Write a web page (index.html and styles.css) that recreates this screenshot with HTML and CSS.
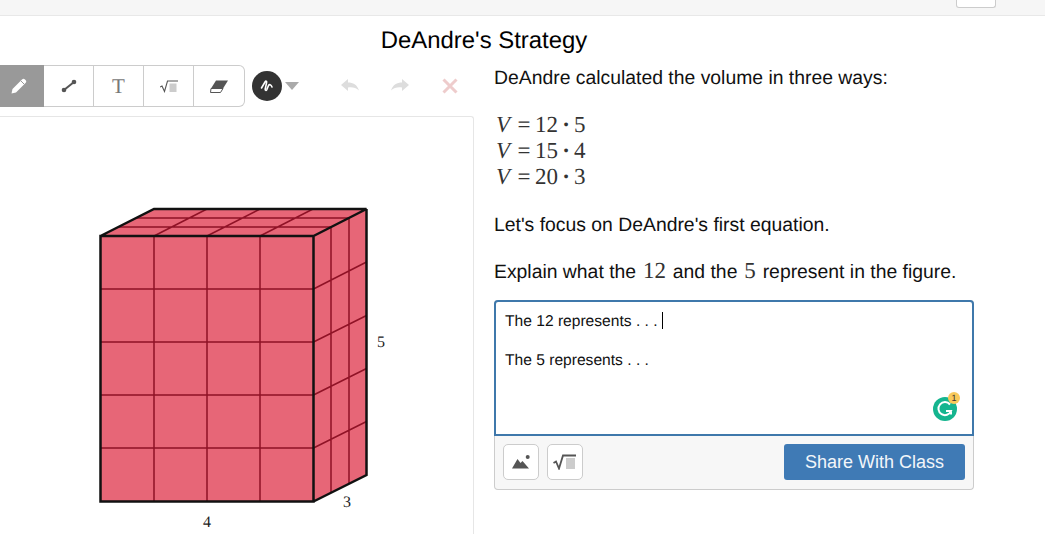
FILE: index.html
```html
<!DOCTYPE html>
<html lang="en">
<head>
<meta charset="utf-8">
<title>DeAndre's Strategy</title>
<link rel="stylesheet" href="styles.css">
</head>
<body>
<header class="topbar"><div class="topbar-btn"></div></header>
<h1 class="title">DeAndre's Strategy</h1>
<main class="main">
  <section class="left">
    <div class="toolbar">
      <div class="tools">
        <div class="tool tool-active">
          <svg width="18" height="18" viewBox="0 0 18 18"><path d="M2.500 12 12 2.500c1-1 2-1 3 0l.500.500c1 1 1 2 0 3L6 15.500 1.500 16.500z" fill="#fff"/><path d="M11 4l3.500 3.500" stroke="#999" stroke-width="1"/></svg>
        </div>
        <div class="tool">
          <svg width="16" height="14" viewBox="0 0 16 14"><path d="M3 11 13 3" stroke="#555" stroke-width="2"/><circle cx="3" cy="11" r="2.300" fill="#555"/><circle cx="13" cy="3" r="2.300" fill="#555"/></svg>
        </div>
        <div class="tool tool-text">T</div>
        <div class="tool">
          <svg width="18" height="13" viewBox="0 0 18 13"><path d="M0 7l2-1 2.500 5.500L7.500 1H18" fill="none" stroke="#555" stroke-width="1.100"/><rect x="9.500" y="3.500" width="7" height="8.500" fill="#ccc"/></svg>
        </div>
        <div class="tool">
          <svg width="18" height="13" viewBox="0 0 18 13"><path d="M6 0.500h12l-5 8H1z" fill="#555"/><path d="M1 8.500h12l-2.500 4h-10z" fill="#fff" stroke="#555"/></svg>
        </div>
      </div>
      <div class="color-dot">
        <svg width="14" height="14" viewBox="0 0 14 14"><path d="M1.500 9 5 3c.8-1.300 2-1 1.600.6L5.200 10c-.3 1.600 1 1.800 1.600.6L8.500 6.500c.8-1.300 2.500-1.300 3.500 1.500" fill="none" stroke="#fff" stroke-width="1.600" stroke-linecap="round"/></svg>
      </div>
      <div class="caret"></div>
      <div class="actions">
        <svg width="20" height="14" viewBox="0 0 20 14"><path d="M1 6 8 0v3.500c5 0 9 2 11 8-3-3-7-3.500-11-3V12z" fill="#ddd"/></svg>
        <svg width="20" height="14" viewBox="0 0 20 14"><path d="M19 6 12 0v3.500c-5 0-9 2-11 8 3-3 7-3.500 11-3V12z" fill="#ddd"/></svg>
        <svg width="20" height="18" viewBox="0 0 20 18"><path d="M3.500 2.500 16.500 15.500M16.500 2.500 3.500 15.500" stroke="#eecccc" stroke-width="3"/></svg>
      </div>
    </div>
    <div class="canvas">
      <svg class="figure" width="473" height="418" viewBox="0 116 473 418">
        <path class="face" d="M100.500 236H313.500V501.500H100.500z"/>
        <path class="face" d="M100.500 236 154 209H366.500L313.500 236z"/>
        <path class="face" d="M313.500 236 366.500 209V475L313.500 501.500z"/>
        <path class="grid" d="M154 236V501.500M207 236V501.500M260 236V501.500M100.500 289H313.500M100.500 342H313.500M100.500 395H313.500M100.500 448H313.500"/>
        <path class="grid" d="M118.500 227H331M136 218H349M154 236 207 209M207 236 260 209M260 236 313 209"/>
        <path class="grid" d="M331 227V492.500M349 218V484M313.500 289 366.500 262M313.500 342 366.500 315.500M313.500 395 366.500 368.500M313.500 448 366.500 421.500"/>
        <path class="edge" d="M100.500 236H313.500V501.500H100.500zM100.500 236 154 209H366.500L313.500 236M366.500 209V475L313.500 501.500"/>
        <text class="label" x="381" y="347" text-anchor="middle">5</text>
        <text class="label" x="347" y="507" text-anchor="middle">3</text>
        <text class="label" x="207" y="527" text-anchor="middle">4</text>
      </svg>
    </div>
  </section>
  <section class="right">
    <p class="line">DeAndre calculated the volume in three ways:</p>
    <div class="equations">
      <div class="eq"><i>V</i><span class="eq-op">=</span>12<span class="eq-dot">·</span>5</div>
      <div class="eq"><i>V</i><span class="eq-op">=</span>15<span class="eq-dot">·</span>4</div>
      <div class="eq"><i>V</i><span class="eq-op">=</span>20<span class="eq-dot">·</span>3</div>
    </div>
    <p class="line line-focus">Let's focus on DeAndre's first equation.</p>
    <p class="line line-explain">Explain what the <span class="num">12</span> and the <span class="num">5</span> represent in the figure.</p>
    <div class="answer">
      <div class="editor">
        <p class="editor-line">The 12 represents . . . <span class="cursor"></span></p>
        <p class="editor-line">The 5 represents . . .</p>
        <div class="grammarly">
          <svg width="24" height="24" viewBox="0 0 24 24"><circle cx="12" cy="12" r="12" fill="#15b58f"/><path d="M17 7.500A6.500 6.500 0 1 0 18 14h-5" fill="none" stroke="#fff" stroke-width="2"/><path d="M18 14.500v3" stroke="#fff" stroke-width="2"/></svg>
          <span class="badge">1</span>
        </div>
      </div>
      <div class="answer-foot">
        <div class="icon-btn">
          <svg width="18" height="14" viewBox="0 0 18 14"><path d="M0 13.500 5.500 4l3 4 2-2 6.500 7.500z" fill="#555"/><circle cx="15.700" cy="2" r="2" fill="#555"/></svg>
        </div>
        <div class="icon-btn">
          <svg width="24" height="16" viewBox="0 0 24 16"><path d="M0.500 9l2.500-1.500 3 7L10 1.500h13" fill="none" stroke="#555" stroke-width="1.800"/><rect x="13" y="4" width="9" height="11" fill="#ccc"/></svg>
        </div>
        <button class="share" type="button">Share With Class</button>
      </div>
    </div>
  </section>
</main>
</body>
</html>
```
FILE: styles.css
```css
* { box-sizing: border-box; }
html, body { margin: 0; height: 534px; overflow: hidden; background: #fff; }
body { font-family: "Liberation Sans", Arial, sans-serif; color: #111; text-rendering: geometricPrecision; }

.topbar { height: 16px; background: #f6f6f6; border-bottom: 1px solid #e8e8e8; display: flex; justify-content: flex-end; padding-right: 49px; }
.topbar-btn { width: 40px; height: 8px; background: #fff; border: 1px solid #ccc; border-top: 0; border-radius: 0 0 3px 3px; }

.title { margin: 0; width: 968px; height: 49px; text-align: center; font-size: 23.900px; font-weight: 400; line-height: 50px; color: #000; }

.main { display: flex; }
.left { width: 474px; flex: none; }
.right { width: 480px; margin-left: 20px; flex: none; }

.toolbar { display: flex; align-items: center; height: 42px; margin-bottom: 9px; }
.tools { display: flex; height: 42px; border: 1px solid #ccc; border-left: 0; border-radius: 0 6px 6px 0; }
.tool { width: 50px; display: flex; align-items: center; justify-content: center; border-right: 1px solid #ccc; }
.tool:last-child { border-right: 0; }
.tool-active { width: 44px; background: #999; border-right: 0; margin: -1px 0; padding-right: 6px; }
.tool-text { font-family: "Liberation Serif", serif; font-size: 21px; color: #777; }
.color-dot { width: 30px; height: 30px; margin-left: 7px; border-radius: 50%; background: #333; display: flex; align-items: center; justify-content: center; }
.caret { width: 0; height: 0; margin-left: 3px; border: 7px solid transparent; border-top: 8px solid #aaa; border-bottom: 0; }
.actions { display: flex; align-items: center; gap: 30px; margin-left: 41px; }

.canvas { height: 418px; border-top: 1px solid #e6e6e6; border-right: 1px solid #e6e6e6; border-radius: 0 3px 0 0; }
.figure { display: block; margin-top: -1px; }
.face { fill: #e76677; stroke: none; }
.grid { fill: none; stroke: #8f1226; stroke-width: 1.500; }
.edge { fill: none; stroke: #111; stroke-width: 2.500; stroke-linejoin: miter; }
.label { font-family: "Liberation Serif", serif; font-size: 16px; fill: #222; }

.line { margin: 0; font-size: 19.370px; line-height: 26px; color: #111; }
.equations { margin-top: 21px; padding-left: 2px; }
.eq { font-family: "Liberation Serif", serif; font-size: 23px; line-height: 26px; color: #333; }
.eq i { display: inline-block; width: 17px; }
.eq-op { display: inline-block; width: 22px; text-align: center; }
.eq-dot { display: inline-block; width: 16px; text-align: center; font-weight: 700; }
.line-focus { margin-top: 22px; }
.line-explain { margin-top: 20px; }
.num { font-family: "Liberation Serif", serif; font-size: 23px; padding: 0 1.500px; color: #333; }

.answer { margin-top: 15px; width: 480px; border: 1px solid #ccc; border-top: 0; border-radius: 4px; background: #f7f7f7; }
.editor { position: relative; height: 136px; margin: 0 -1px; width: 480px; background: #fff; border: 2px solid #3f78ab; border-radius: 4px 4px 0 0; padding: 10px 9px; }
.editor-line { margin: 0 0 19px; font-size: 15.600px; line-height: 20px; color: #111; white-space: pre-wrap; }
.cursor { display: inline-block; width: 1px; height: 17px; background: #000; vertical-align: -3px; }
.grammarly { position: absolute; left: 437px; top: 95px; width: 24px; height: 24px; }
.grammarly svg { display: block; }
.badge { position: absolute; left: 15px; top: -5px; width: 12px; height: 12px; border-radius: 50%; background: #f8c95b; font-size: 9px; line-height: 12px; text-align: center; color: #333; }

.answer-foot { display: flex; align-items: flex-start; gap: 8px; height: 53px; padding: 8px 8px 0; }
.icon-btn { width: 36px; height: 36px; background: #fff; border: 1px solid #ccc; border-radius: 5px; display: flex; align-items: center; justify-content: center; }
.share { margin-left: auto; width: 181px; height: 36px; border: 0; border-radius: 3px; background: #3f7ab5; color: #f2f6fa; font-family: "Liberation Sans", Arial, sans-serif; font-size: 18px; padding: 0; }
```
